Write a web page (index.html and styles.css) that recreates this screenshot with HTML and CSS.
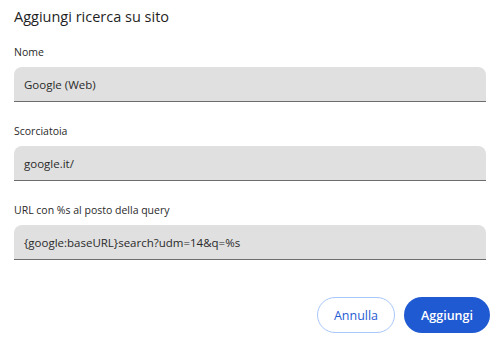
FILE: index.html
```html
<!DOCTYPE html>
<html lang="it">
<head>
<meta charset="utf-8">
<title>Aggiungi ricerca su sito</title>
<link rel="stylesheet" href="styles.css">
</head>
<body>
<div class="dialog">
  <h1 class="title">Aggiungi ricerca su sito</h1>
  <div class="field">
    <label class="label">Nome</label>
    <div class="input">Google (Web)</div>
  </div>
  <div class="field">
    <label class="label">Scorciatoia</label>
    <div class="input">google.it/</div>
  </div>
  <div class="field">
    <label class="label">URL con %s al posto della query</label>
    <div class="input">{google:baseURL}search?udm=14&amp;q=%s</div>
  </div>
  <div class="actions">
    <button class="btn btn-outline">Annulla</button>
    <button class="btn btn-primary">Aggiungi</button>
  </div>
</div>
</body>
</html>
```
FILE: styles.css
```css
html, body {
  margin: 0;
  padding: 0;
  background: #ffffff;
}
body {
  font-family: "Open Sans", "Noto Sans", "Liberation Sans", sans-serif;
  color: #1f1f1f;
}
.dialog {
  width: 497px;
  height: 344px;
  box-sizing: border-box;
  padding: 7px 7px 0 14px;
  display: flex;
  flex-direction: column;
}
.title {
  margin: 0;
  font-size: 14.5px;
  font-weight: 400;
  line-height: 20px;
  color: #1f1f1f;
}
.field {
  display: flex;
  flex-direction: column;
  gap: 7px;
  margin-top: 17px;
}
.field + .field {
  margin-top: 21px;
}
.label {
  font-size: 10.5px;
  line-height: 16px;
  font-weight: 500;
  color: #2a2a2a;
}
.input {
  width: 472px;
  height: 35px;
  box-sizing: border-box;
  background: #e0e0e0;
  border-radius: 8px 8px 0 0;
  border-bottom: 1px solid #6d6d6d;
  padding: 0 10px;
  display: flex;
  align-items: center;
  font-size: 11.5px;
  color: #2a2a2a;
}
.actions {
  display: flex;
  justify-content: flex-end;
  gap: 9px;
  margin-top: 37px;
}
.btn {
  height: 36px;
  border-radius: 18px;
  font-family: inherit;
  font-size: 12.5px;
  padding: 0;
  cursor: pointer;
}
.btn-outline {
  width: 78px;
  background: #ffffff;
  border: 1px solid #a8c7fa;
  color: #1f5bd3;
  font-weight: 500;
}
.btn-primary {
  width: 86px;
  background: #1f5ad3;
  border: none;
  color: #ffffff;
  font-weight: 600;
}
```
